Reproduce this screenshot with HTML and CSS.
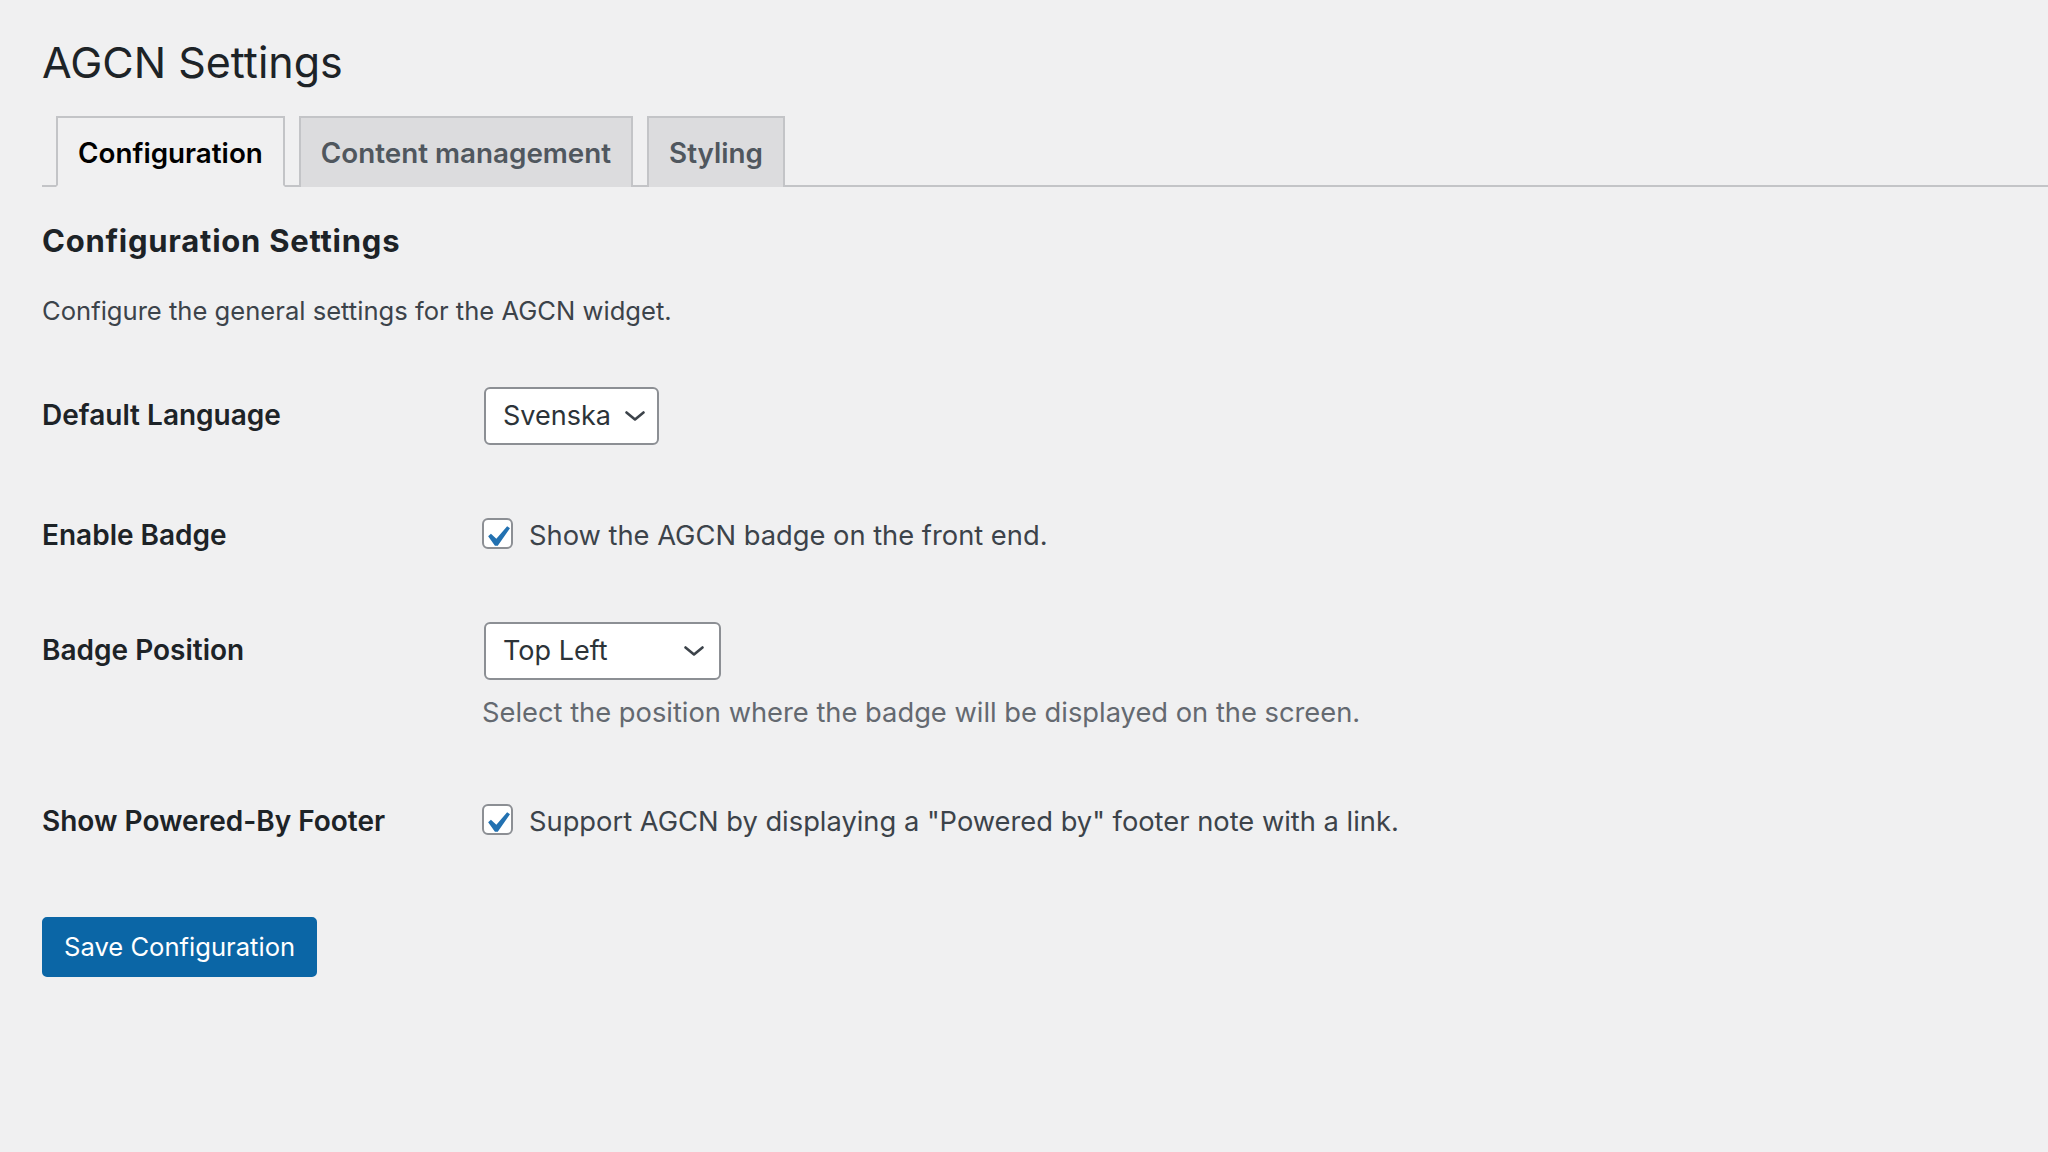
FILE: index.html
```html
<!DOCTYPE html>
<html lang="en">
<head>
<meta charset="utf-8">
<title>AGCN Settings</title>
<link rel="stylesheet" href="styles.css">
</head>
<body>
<div class="wrap">
  <h1 class="page-title">AGCN Settings</h1>
  <nav class="nav-tab-wrapper">
    <a class="nav-tab nav-tab-active">Configuration</a>
    <a class="nav-tab">Content management</a>
    <a class="nav-tab">Styling</a>
  </nav>
  <h2 class="section-title">Configuration Settings</h2>
  <p class="intro">Configure the general settings for the AGCN widget.</p>

  <div class="form-table">
    <div class="form-row">
      <div class="form-label">Default Language</div>
      <div class="form-field">
        <div class="select select-lang">
          <span class="select-value">Svenska</span>
          <svg class="chevron" viewBox="0 0 20 10" width="20" height="10"><path d="M1.5 1.5 L10 8.5 L18.5 1.5" fill="none" stroke="#3c434a" stroke-width="2.6" stroke-linecap="round" stroke-linejoin="round"/></svg>
        </div>
      </div>
    </div>

    <div class="form-row form-row-check">
      <div class="form-label">Enable Badge</div>
      <div class="form-field">
        <label class="check-line"><span class="checkbox"><svg class="checkmark" viewBox="0 0 20 20" width="42" height="42"><path d="M14.83 4.89l1.34.94-5.81 8.38H9.02L5.78 9.67l1.34-1.25 2.57 2.4z" fill="#2271b1"/></svg></span><span class="check-text">Show the AGCN badge on the front end.</span></label>
      </div>
    </div>

    <div class="form-row">
      <div class="form-label">Badge Position</div>
      <div class="form-field">
        <div class="select select-pos">
          <span class="select-value">Top Left</span>
          <svg class="chevron" viewBox="0 0 20 10" width="20" height="10"><path d="M1.5 1.5 L10 8.5 L18.5 1.5" fill="none" stroke="#3c434a" stroke-width="2.6" stroke-linecap="round" stroke-linejoin="round"/></svg>
        </div>
        <p class="description">Select the position where the badge will be displayed on the screen.</p>
      </div>
    </div>

    <div class="form-row form-row-check">
      <div class="form-label">Show Powered-By Footer</div>
      <div class="form-field">
        <label class="check-line"><span class="checkbox"><svg class="checkmark" viewBox="0 0 20 20" width="42" height="42"><path d="M14.83 4.89l1.34.94-5.81 8.38H9.02L5.78 9.67l1.34-1.25 2.57 2.4z" fill="#2271b1"/></svg></span><span class="check-text">Support AGCN by displaying a "Powered by" footer note with a link.</span></label>
      </div>
    </div>
  </div>

  <div class="submit">
    <button class="button-primary" type="button">Save Configuration</button>
  </div>
</div>
</body>
</html>
```

FILE: styles.css
```css
html, body {
  margin: 0;
  padding: 0;
  background: #f0f0f1;
}

body {
  font-family: Inter, "Noto Sans", "Liberation Sans", sans-serif;
  color: #3c434a;
  width: 2048px;
  height: 1152px;
  overflow: hidden;
}

.wrap {
  padding: 36px 0 0 42px;
}

.page-title {
  margin: 0;
  font-size: 43px;
  line-height: 53px;
  font-weight: 400;
  color: #1d2327;
}

.nav-tab-wrapper {
  display: flex;
  align-items: flex-end;
  margin-top: 27px;
  padding-left: 0;
  border-bottom: 2px solid #c3c4c7;
}

.nav-tab {
  display: block;
  margin-left: 14px;
  margin-bottom: -2px;
  padding: 15px 20px 14px;
  border: 2px solid #c3c4c7;
  border-bottom: none;
  background: #dcdcde;
  color: #50575e;
  font-size: 27.8px;
  line-height: 40px;
  font-weight: 600;
  text-decoration: none;
}

.nav-tab-active {
  background: #f0f0f1;
  color: #000;
  border-bottom: 2px solid #f0f0f1;
  padding-bottom: 12px;
}

.section-title {
  margin: 34px 0 0;
  font-size: 31px;
  line-height: 40px;
  font-weight: 700;
  letter-spacing: 0.75px;
  color: #1d2327;
}

.intro {
  margin: 32px 0 0;
  font-size: 25.6px;
  line-height: 36px;
  color: #3c434a;
}

.form-table {
  margin-top: 22px;
  display: flex;
  flex-direction: column;
}

.form-row {
  display: grid;
  grid-template-columns: 440px 1fr;
  align-items: baseline;
  padding: 36px 0;
}

.form-row-check {
  padding-bottom: 32px;
}

.form-label {
  font-size: 28px;
  line-height: 36px;
  font-weight: 600;
  color: #1d2327;
}

.form-field {
  font-size: 27.3px;
  line-height: 36px;
}

.select {
  display: inline-flex;
  align-items: center;
  box-sizing: border-box;
  height: 58px;
  margin-left: 2px;
  padding: 0 15px 0 17px;
  border: 2px solid #8c8f94;
  border-radius: 6px;
  background: #fff;
  color: #2c3338;
  font-size: 27px;
  line-height: 54px;
}

.select-lang {
  width: 175px;
  gap: 14px;
}

.select-pos {
  width: 237px;
  justify-content: space-between;
}

.chevron {
  flex: none;
  display: block;
}

.check-line {
  display: block;
  color: #3c434a;
}

.checkbox {
  position: relative;
  display: inline-block;
  vertical-align: -4px;
  box-sizing: border-box;
  width: 31px;
  height: 31px;
  margin-right: 16px;
  border: 2px solid #8c8f94;
  border-radius: 6px;
  background: #fff;
}

.checkmark {
  position: absolute;
  left: -8px;
  top: -4px;
}

.description {
  margin: 15px 0 0;
  font-size: 27.3px;
  line-height: 36px;
  color: #646970;
}

.submit {
  margin-top: 45px;
}

.button-primary {
  display: inline-block;
  box-sizing: border-box;
  height: 60px;
  padding: 0 20px;
  border: 2px solid #0b66a6;
  border-radius: 5px;
  background: #0b66a6;
  color: #fff;
  font-family: Inter, "Noto Sans", "Liberation Sans", sans-serif;
  font-size: 25.6px;
  line-height: 56px;
  font-weight: 400;
  cursor: pointer;
}
```
